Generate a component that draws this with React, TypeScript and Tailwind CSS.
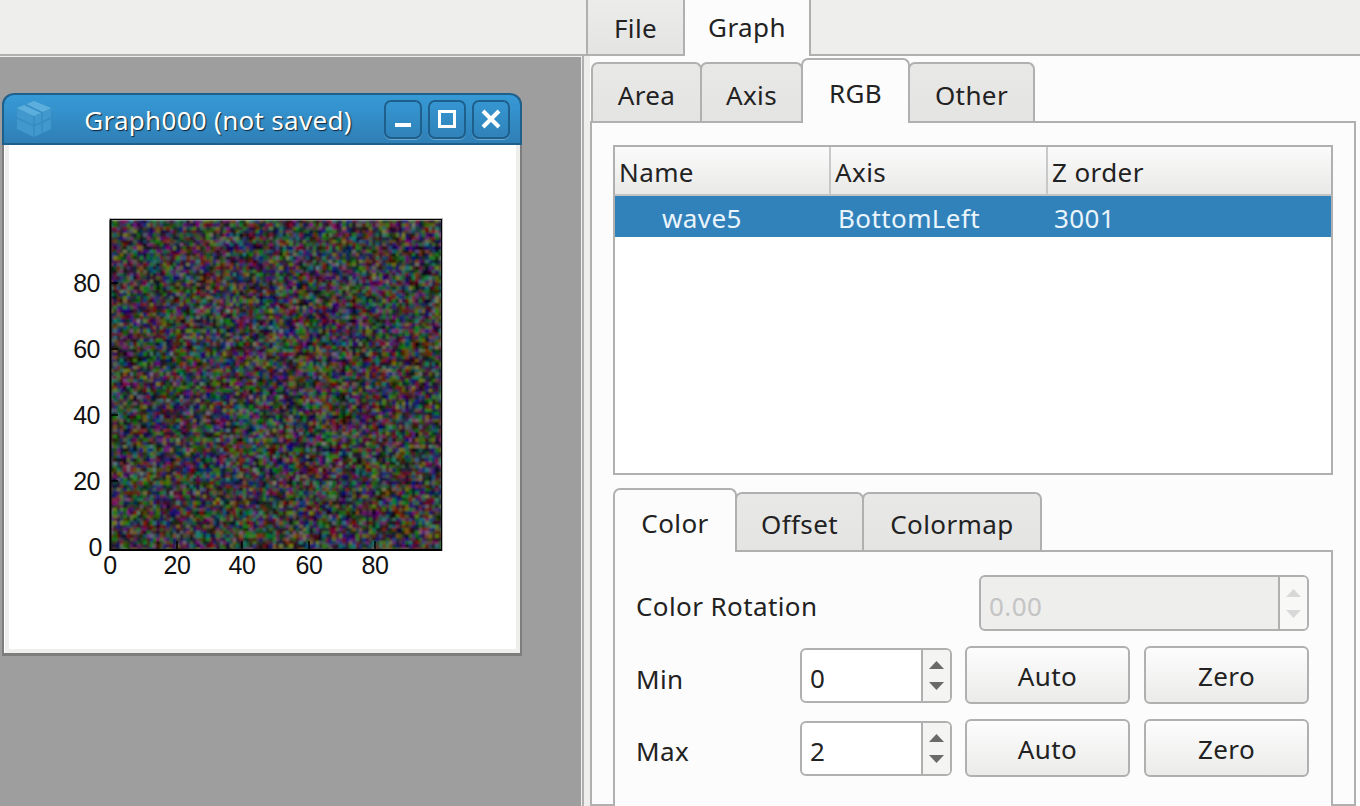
import React, { useMemo } from "react";

const font = { fontFamily: '"Noto Sans", sans-serif' };

function Noise() {
  const rects = useMemo(() => {
    let s = 12345;
    const r = () => {
      s = (s * 1664525 + 1013904223) >>> 0;
      return (s >>> 8) / 16777216;
    };
    const out: React.ReactNode[] = [];
    for (let y = 0; y < 100; y++) {
      for (let x = 0; x < 100; x++) {
        const ch = () => Math.round(Math.pow(r(), 1.6) * 125 + 4);
        const c = `rgb(${ch()},${ch()},${ch()})`;
        out.push(<rect key={x + "-" + y} x={x} y={y} width={1.1} height={1.1} fill={c} />);
      }
    }
    return out;
  }, []);
  return (
    <svg x="107" y="75" width="332" height="331" viewBox="0 0 100 100" preserveAspectRatio="none">
      <defs>
        <filter id="soft" x="0" y="0" width="100%" height="100%">
          <feGaussianBlur stdDeviation="0.25" />
        </filter>
      </defs>
      <g filter="url(#soft)" shapeRendering="crispEdges">{rects}</g>
    </svg>
  );
}

function Plot() {
  const ys = [["80", 138], ["60", 204], ["40", 270], ["20", 336]] as const;
  const xs = [["0", 107], ["20", 174], ["40", 239], ["60", 306], ["80", 372]] as const;
  return (
    <svg width="507" height="503" viewBox="0 0 507 503" className="block">
      <g transform="translate(-6 0)">
        <Noise />
        <rect x="106.5" y="73.5" width="333" height="332" fill="none" stroke="#b8b8b8" strokeWidth="1" />
        <rect x="107.5" y="74.5" width="331" height="330" fill="none" stroke="#000" strokeWidth="1" />
        <path d="M107 405H439M107.5 75V406" stroke="#000" strokeWidth="2" fill="none" />
        {ys.map(([t, y]) => (
          <path key={t} d={`M107 ${y}h8`} stroke="#000" strokeWidth="1.5" />
        ))}
        {[174, 239, 306, 372].map((x) => (
          <path key={x} d={`M${x} 404v-8`} stroke="#000" strokeWidth="1.5" />
        ))}
        <g fontFamily='"Liberation Sans", sans-serif' fontSize="25" fill="#111" letterSpacing="-0.5">
          {ys.map(([t, y]) => (
            <text key={t} x="97" y={y + 9} textAnchor="end">{t}</text>
          ))}
          <text x="99" y="411" textAnchor="end">0</text>
          {xs.map(([t, x]) => (
            <text key={t} x={x} y="429" textAnchor="middle">{t}</text>
          ))}
        </g>
      </g>
    </svg>
  );
}

function WinBtn({ children }: { children: React.ReactNode }) {
  return (
    <div className="w-[38px] h-[39px] rounded-[7px] border-2 border-[#1f5f8c] shadow-[0_1px_0_#6aa6d0] flex items-center justify-center">
      {children}
    </div>
  );
}

function MdiWindow() {
  return (
    <div className="w-[520px] h-[563px] flex flex-col border-r-2 border-b-[3px] border-l-2 border-[#7d7d7d] rounded-t-[12px] bg-white">
      <div className="-mx-[2px] h-[52px] shrink-0 rounded-t-[12px] border-2 border-[#1f5f8c] bg-gradient-to-b from-[#379ad6] to-[#2f7fb6] flex items-center pl-[12px] pr-[10px]">
        <svg width="36" height="38" viewBox="0 0 36 38" className="shrink-0">
          <path d="M18 1 35 8v21L18 37 1 29V8z" fill="#4098cd" />
          <path d="M18 1 35 8 18 16 1 8z" fill="#5cafdd" />
          <path d="M18 16v21M1 18l17 8 17-8M9 4.500l17 8v21" stroke="#358cc2" strokeWidth="1.500" fill="none" />
        </svg>
        <div className="flex-1 text-center text-white text-[26px] tracking-[0.3px] leading-none whitespace-nowrap mt-[1px] [text-shadow:1px_1px_1px_#123]">
          Graph000 (not saved)
        </div>
        <div className="flex gap-[6px]">
          <WinBtn><div className="w-[16px] h-[4px] bg-white mt-[12px]" /></WinBtn>
          <WinBtn><div className="w-[18px] h-[18px] border-[3px] border-white" /></WinBtn>
          <WinBtn>
            <svg width="20" height="20" viewBox="0 0 20 20"><path d="M2 2 18 18M18 2 2 18" stroke="#fff" strokeWidth="4" /></svg>
          </WinBtn>
        </div>
      </div>
      <div className="flex-1 ml-[1px] border-[4px] border-t-0 border-[#eeeeec] bg-white">
        <Plot />
      </div>
    </div>
  );
}

function Tab({ label, active, w, h, first }: { label: string; active?: boolean; w: string; h: string; first?: boolean }) {
  return (
    <div
      className={`${w} ${h} shrink-0 flex items-center justify-center border-t-2 border-x-2 border-[#b0b0b0] rounded-t-[7px] ${
        active ? "bg-[#fcfcfc] -mb-[2px] z-10 pt-[4px]" : "bg-gradient-to-b from-[#e8e8e7] to-[#e4e4e3] pt-[5px]"
      } ${first ? "" : "-ml-[2px]"}`}
    >
      {label}
    </div>
  );
}

function Spin({ value, w, h, disabled }: { value: string; w: string; h: string; disabled?: boolean }) {
  const arrow = disabled ? "#d8d8d8" : "#6a6a6a";
  return (
    <div className={`${w} ${h} flex rounded-[6px] border-2 border-[#b0b0b0] overflow-hidden ${disabled ? "bg-[#eeeeec]" : "bg-white"}`}>
      <div className={`flex-1 flex items-center pl-[8px] ${disabled ? "pt-[6px] text-[#c4c4c4]" : "pt-[6px] text-[#222]"}`}>{value}</div>
      <div className={`w-[29px] border-l-2 border-[#b0b0b0] flex flex-col items-center justify-center gap-[13px] ${disabled ? "bg-[#f8f8f7]" : "bg-[#f4f4f3]"}`}>
        <svg width="15" height="8" viewBox="0 0 15 8"><path d="M7.500 0 15 8H0z" fill={arrow} /></svg>
        <svg width="15" height="8" viewBox="0 0 15 8"><path d="M7.500 8 15 0H0z" fill={arrow} /></svg>
      </div>
    </div>
  );
}

function Btn({ label }: { label: string }) {
  return (
    <div className="w-[165px] h-[58px] pt-[2px] flex items-center justify-center rounded-[6px] border-2 border-[#b0b0b0] bg-gradient-to-b from-[#fdfdfd] to-[#ebebea]">
      {label}
    </div>
  );
}

function HeaderCell({ label, w, border }: { label: string; w: string; border?: boolean }) {
  return (
    <div className={`${w} h-full flex items-center pl-[4px] pt-[3px] ${border ? "border-r-2 border-[#c8c8c8]" : ""}`}>{label}</div>
  );
}

export default function App() {
  return (
    <div className="w-[1360px] h-[806px] overflow-hidden flex flex-col bg-[#eeeeec] text-[26px] tracking-[0.4px] text-[#222]" style={font}>
      <div className="h-[56px] shrink-0 flex items-end border-b-2 border-[#b0b0b0]">
        <div className="w-[586px] shrink-0" />
        <div className="w-[99px] h-[56px] -mb-[2px] flex items-center justify-center pt-[2px] border-2 border-t-0 border-[#b0b0b0] bg-gradient-to-b from-[#ececeb] to-[#e4e4e3]">
          File
        </div>
        <div className="w-[126px] h-[56px] -mb-[2px] z-10 flex items-center justify-center pb-[2px] border-r-2 border-[#b0b0b0] bg-[#fcfcfc]">
          Graph
        </div>
      </div>
      <div className="flex-1 flex min-h-0">
        <div className="w-[582px] shrink-0 bg-[#9e9e9e] pt-[36px] pl-[2px] border-r border-t border-[#eeeeec]">
          <MdiWindow />
        </div>
        <div className="w-[2px] shrink-0 bg-[#b0b0b0]" />
        <div className="w-[6px] shrink-0" />
        <div className="w-[770px] shrink-0 bg-[#fcfcfc] flex flex-col">
          <div className="h-[65px] shrink-0 flex items-end pl-[1px]">
            <Tab label="Area" w="w-[111px]" h="h-[59px]" first />
            <Tab label="Axis" w="w-[103px]" h="h-[59px]" />
            <Tab label="RGB" active w="w-[109px]" h="h-[65px]" />
            <Tab label="Other" w="w-[127px]" h="h-[59px]" />
          </div>
          <div className="flex-1 min-h-0 w-[766px] border-2 border-[#b0b0b0] pt-[22px] pl-[21px] bg-[#fcfcfc]">
            <div className="w-[720px] h-[330px] border-2 border-[#b0b0b0] bg-white">
              <div className="h-[49px] flex border-b-2 border-[#c4c4c4] bg-gradient-to-b from-[#fbfbfb] to-[#e9e9e8]">
                <HeaderCell label="Name" w="w-[216px]" border />
                <HeaderCell label="Axis" w="w-[217px]" border />
                <HeaderCell label="Z order" w="flex-1" />
              </div>
              <div className="h-[41px] pt-[4px] flex items-center bg-[#3182bb] text-[#eaf4fb]">
                <div className="w-[216px] pl-[47px]">wave5</div>
                <div className="w-[217px] pl-[7px]">BottomLeft</div>
                <div className="pl-[6px]">3001</div>
              </div>
            </div>
            <div className="mt-[14px] h-[61px] flex items-end">
              <Tab label="Color" active w="w-[124px]" h="h-[64px]" first />
              <Tab label="Offset" w="w-[129px]" h="h-[58px]" />
              <Tab label="Colormap" w="w-[180px]" h="h-[58px]" />
            </div>
            <div className="w-[720px] h-[300px] border-2 border-[#b0b0b0] bg-[#fcfcfc] pl-[21px] pr-[22px] pt-[23px]">
              <div className="flex items-center h-[56px] justify-between">
                <span className="pt-[6px]">Color Rotation</span>
                <Spin value="0.00" w="w-[330px]" h="h-[56px]" disabled />
              </div>
              <div className="mt-[15px] flex items-center h-[58px]">
                <span className="w-[164px] pt-[8px]">Min</span>
                <Spin value="0" w="w-[152px]" h="h-[55px]" />
                <div className="ml-[13px] flex gap-[14px]"><Btn label="Auto" /><Btn label="Zero" /></div>
              </div>
              <div className="mt-[15px] flex items-center h-[58px]">
                <span className="w-[164px] pt-[6px]">Max</span>
                <Spin value="2" w="w-[152px]" h="h-[55px]" />
                <div className="ml-[13px] flex gap-[14px]"><Btn label="Auto" /><Btn label="Zero" /></div>
              </div>
            </div>
          </div>
        </div>
      </div>
    </div>
  );
}
